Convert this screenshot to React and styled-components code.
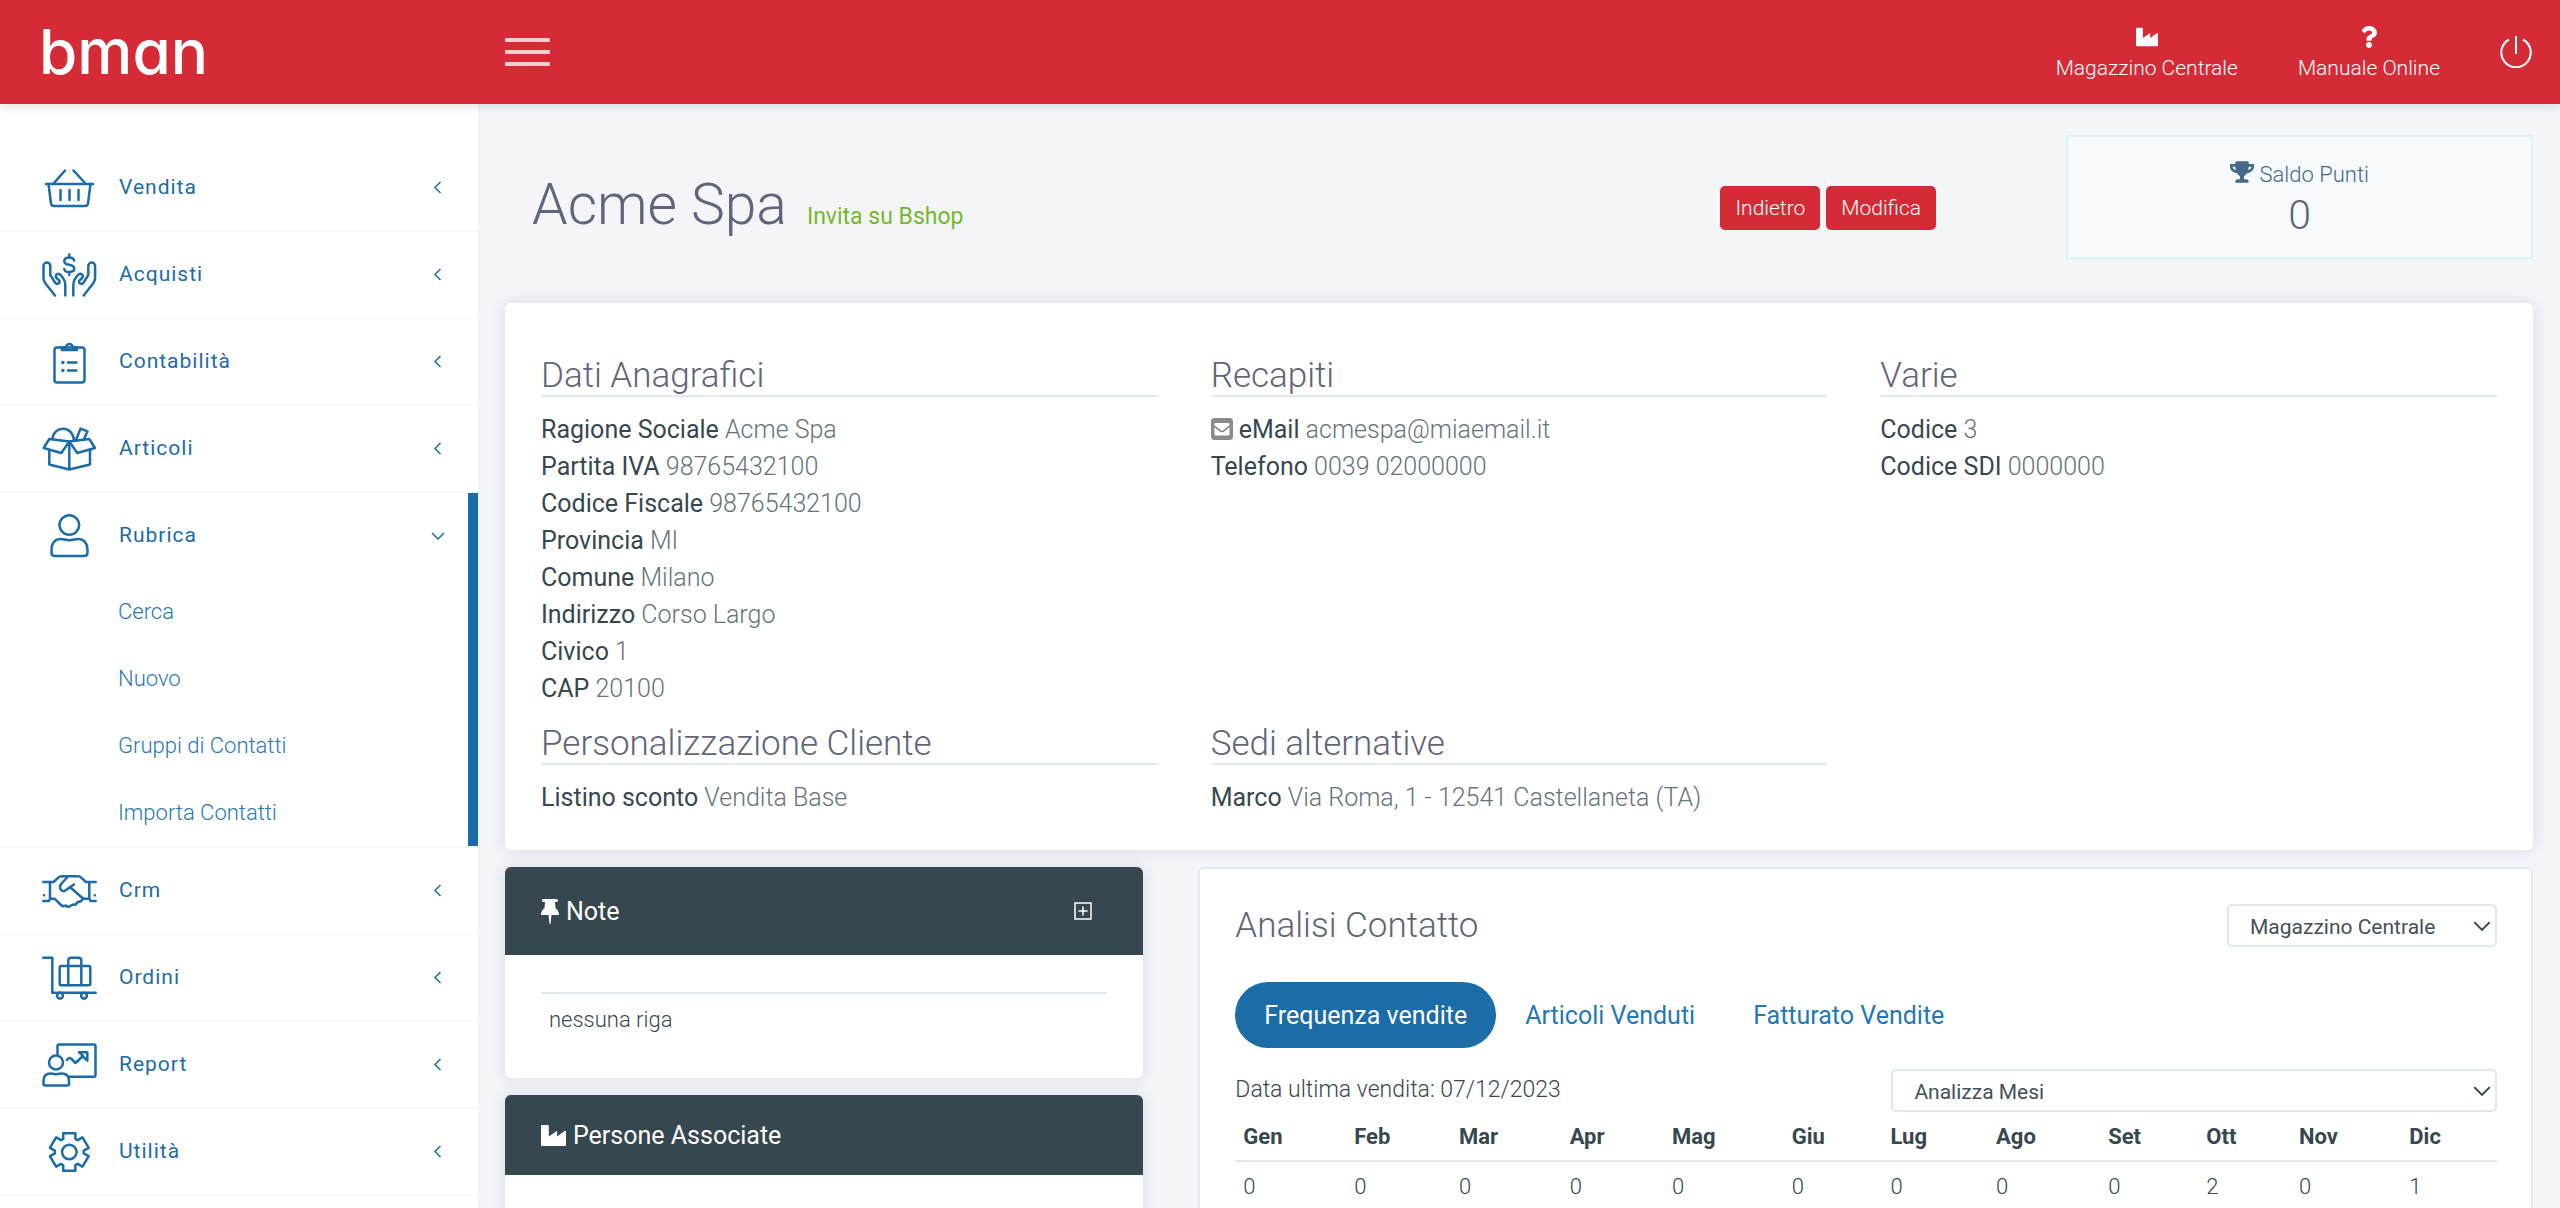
import React from "react";
import styled, { createGlobalStyle } from "styled-components";
import { FaQuestion, FaTrophy } from "react-icons/fa";

const GlobalStyle = createGlobalStyle`
  * {
    box-sizing: border-box;
  }
  body {
    margin: 0;
    background: #f3f5f9;
    color: #37474f;
    font-family: Roboto, "Liberation Sans", sans-serif;
    font-size: 25px;
    font-weight: 300;
    line-height: 37px;
  }
  a {
    color: inherit;
    text-decoration: none;
  }
  ul {
    margin: 0;
    padding: 0;
    list-style: none;
  }
  button,
  select {
    font: inherit;
  }
`;

const Page = styled.div`
  height: 100vh;
  display: flex;
  flex-direction: column;
  overflow: hidden;
`;

const Header = styled.header`
  flex: none;
  z-index: 1;
  display: flex;
  align-items: center;
  height: 104px;
  padding: 0 28px 0 39px;
  background: #d52b36;
  color: #fff;
  box-shadow: 0 2px 10px rgba(60, 70, 90, 0.16);
`;

const Logo = styled.a`
  width: 466px;
  font-family: Inter, Roboto, sans-serif;
  font-size: 62px;
  line-height: 80px;
  font-weight: 500;
  font-feature-settings: "cv11";
`;

const MenuToggle = styled.button`
  display: flex;
  flex-direction: column;
  gap: 8px;
  width: 45px;
  padding: 0;
  border: 0;
  background: none;
`;

const MenuBar = styled.span`
  height: 4px;
  background: #f7cdd0;
`;

const HeaderLinks = styled.nav`
  display: flex;
  align-items: center;
  gap: 60px;
  margin-left: auto;
`;

const HeaderLink = styled.a`
  display: flex;
  flex-direction: column;
  align-items: center;
  gap: 5px;
  padding-top: 4px;
  font-size: 21px;
  line-height: 30px;
`;

const PowerLink = styled.a`
  display: flex;
`;

const Body = styled.div`
  flex: 1;
  display: flex;
  min-height: 0;
`;

const Sidebar = styled.nav`
  flex: none;
  width: 478px;
  padding-top: 41px;
  background: #fff;
`;

const MenuItem = styled.li`
  border-bottom: 2px solid #f7f8fa;
  box-shadow: ${(props) => (props.$open ? "inset -10px 0 #1c6ca8" : "none")};
`;

const MenuLink = styled.a`
  display: flex;
  align-items: center;
  height: 85px;
  padding-left: 42px;
  padding-right: 33px;
  color: #1c6ca8;
  font-size: 21px;
  font-weight: 400;
  letter-spacing: 1px;
`;

const MenuLabel = styled.span`
  flex: 1;
  margin-left: 21px;
  padding-bottom: 1px;
`;

const SubLink = styled.a`
  display: block;
  padding-left: 118px;
  color: #1f78b8;
  font-size: 22px;
  line-height: 67px;
`;

const Main = styled.main`
  flex: 1;
  min-width: 0;
  padding: 31px 27px 0;
`;

const TitleRow = styled.div`
  display: flex;
  align-items: center;
  height: 124px;
  margin-bottom: 44px;
  padding-left: 27px;
`;

const Title = styled.h1`
  flex: 1;
  margin: 28px 0 0;
  color: #606579;
  font-size: 57px;
  line-height: 70px;
  font-weight: 300;
`;

const InviteLink = styled.a`
  margin-left: 20px;
  color: #76b82a;
  font-size: 23px;
  font-weight: 400;
`;

const Actions = styled.div`
  display: flex;
  gap: 6px;
  margin-top: 22px;
  margin-right: 130px;
`;

const Action = styled.button`
  height: 44px;
  padding: 0 15px;
  border: 0;
  border-radius: 5px;
  background: #d52b36;
  color: #fff;
  font-size: 21px;
`;

const Points = styled.div`
  flex: 0 0 467px;
  height: 124px;
  padding-top: 22px;
  border: 2px solid #d9f1f7;
  background: #f7fafd;
  color: #466a86;
  font-size: 22px;
  line-height: 32px;
  text-align: center;

  svg {
    vertical-align: -2px;
  }
`;

const PointsValue = styled.div`
  color: #606579;
  font-size: 41px;
  line-height: 48px;
`;

const Card = styled.section`
  border-radius: 6px;
  background: #fff;
  box-shadow: 0 0 16px rgba(60, 70, 90, 0.14);
  overflow: hidden;
`;

const InfoCard = styled(Card)`
  display: grid;
  grid-template-columns: repeat(3, 1fr);
  column-gap: 53px;
  padding: 36px 36px 34px;
  margin-bottom: 17px;
`;

const InfoTitle = styled.h2`
  margin: 0 0 14px;
  padding-top: 18px;
  border-bottom: 2px solid #e3e9f1;
  color: #606579;
  font-size: 35px;
  line-height: 38px;
  font-weight: 300;
`;

const Fact = styled.div`
  color: #66737a;

  svg {
    margin-right: 6px;
    vertical-align: -2px;
  }
`;

const FactLabel = styled.span`
  color: #37474f;
  font-weight: 400;
`;

const Columns = styled.div`
  display: grid;
  grid-template-columns: 638fr 1334fr;
  gap: 55px;
`;

const Side = styled.div`
  display: flex;
  flex-direction: column;
  gap: 17px;
`;

const PanelHead = styled.header`
  display: flex;
  align-items: center;
  gap: 7px;
  height: ${(props) => (props.$tall ? 88 : 80)}px;
  padding: 0 51px 0 36px;
  background: #37474f;
  color: #fff;
`;

const PanelTitle = styled.h3`
  flex: 1;
  margin: 0;
  font-size: 25px;
  font-weight: 400;
`;

const AddButton = styled.button`
  display: flex;
  padding: 0;
  border: 0;
  background: none;
  color: #fff;
`;

const PanelBody = styled.div`
  min-height: 123px;
  padding: 37px 36px 33px;
`;

const Empty = styled.p`
  margin: 0;
  padding: 7px 8px;
  border-top: 2px solid #e3e9f1;
  font-size: 22px;
`;

const Analysis = styled(Card)`
  border: 2px solid #e3e9f1;
  border-bottom: 0;
  border-radius: 6px 6px 0 0;
  padding: 35px 34px 35px 35px;
  min-height: 400px;
  box-shadow: none;
`;

const Split = styled.div`
  display: flex;
  justify-content: space-between;
  align-items: center;
`;

const AnalysisTitle = styled.h2`
  margin: 0;
  color: #606579;
  font-size: 35px;
  line-height: 43px;
  font-weight: 300;
`;

const SelectBox = styled.div`
  display: grid;
  align-items: center;
  width: ${(props) => props.$width};

  > * {
    grid-area: 1 / 1;
  }
  svg {
    justify-self: end;
    margin-right: 6px;
    pointer-events: none;
  }
`;

const Select = styled.select`
  width: 100%;
  height: 43px;
  padding: 3px 21px 0;
  border: 2px solid #e0e7f0;
  border-radius: 5px;
  background: #fff;
  color: #455058;
  font-size: 21px;
  line-height: 36px;
  font-weight: 400;
  appearance: none;
`;

const Tabs = styled.div`
  display: flex;
  margin: 35px 0 21px;
`;

const Tab = styled.button`
  height: 66px;
  padding: 0 29px;
  border: 0;
  border-radius: 33px;
  background: ${(props) => (props.$active ? "#1c6ca8" : "none")};
  color: ${(props) => (props.$active ? "#fff" : "#1f78b8")};
  font-size: 25px;
  font-weight: 400;
`;

const LastSale = styled.div`
  padding-bottom: 3px;
  font-size: 23px;
`;

const Months = styled.table`
  width: 100%;
  border-collapse: collapse;
  font-size: 22px;
  line-height: 32px;

  th,
  td {
    padding: 9px 8px 7px;
    text-align: left;
    font-weight: 300;
  }
  th {
    border-bottom: 2px solid #e3e9ee;
    font-weight: 700;
  }
`;

const Drawing = styled.svg`
  flex: none;
  width: 56px;
  height: 44px;
  fill: none;
  stroke: currentColor;
  stroke-width: 2.5;
  stroke-linecap: round;
  stroke-linejoin: round;
`;

const gear = (() => {
  const points = [];
  for (let i = 0; i < 6; i++) {
    [
      [14.5, -25],
      [19.8, -18],
      [19.8, 18],
      [14.5, 25]
    ].forEach(([r, offset]) => {
      const angle = ((i * 60 + offset - 90) * Math.PI) / 180;
      points.push(
        `${(27.3 + r * Math.cos(angle)).toFixed(1)},${(
          22 +
          r * Math.sin(angle)
        ).toFixed(1)}`
      );
    });
  }
  return points.join(" ");
})();

const hand =
  "M13 42.5 L3.5 30.5 Q1.5 28 1.5 25 V13 a3.4 3.4 0 0 1 6.8 0 V22 L13 29.5 c2 2.6 5.5 1 4.2-2 L14.5 25 c-2-3 1.5-5.8 4-3.2 C22 26 23.3 28 23.3 33 V42.5";

const icons = {
  basket: (
    <>
      <path d="M4 18 H51 M23 4.5 L12 17 M31.5 4.5 L43 17" />
      <path d="M6.5 18 L9 37.5 Q9.5 40 12 40 H43 Q45.5 40 46 37.5 L48.5 18" />
      <path d="M18.5 24 V34 M27.5 24 V34 M36.5 24 V34" />
    </>
  ),
  hands: (
    <>
      <path d={hand} />
      <path d={hand} transform="matrix(-1 0 0 1 54.6 0)" />
      <path d="M32 7.5 Q31.5 4.5 27.3 4.5 Q22.3 4.5 22.3 8.2 Q22.3 11 27.3 11.8 Q32.3 12.7 32.3 15.6 Q32.3 19 27.3 19 Q22.5 19 22.3 16 M27.3 1.5 V4.5 M27.3 19 V22" />
    </>
  ),
  clipboard: (
    <>
      <rect x="12.5" y="7.5" width="30" height="35" rx="2.5" />
      <path d="M20 7.5 H24 a3.4 3.4 0 1 1 6.8 0 H35 V10 H20z" />
      <path d="M26 22.5 H34.5 M26 30.5 H34.5" />
      <path strokeWidth="3.5" d="M20.8 22.5 h.1 M20.8 30.5 h.1" />
    </>
  ),
  box: (
    <>
      <path d="M7.3 12 L27.3 14.5 L19.3 26 L1.7 21z M47.3 12 L27.3 14.5 L35.3 26 L53 21z" />
      <path d="M7.3 23 V37.5 L27.3 42.5 L48 37.5 V23 M27.3 14.5 V42" />
      <path d="M10.3 12 C12 -2 31 -2 32 13.5 M34 13 L38.5 1.7 L45.5 4.3 L42 12" />
    </>
  ),
  person: (
    <>
      <circle cx="27.3" cy="11" r="9.8" />
      <path d="M13 42 H42 Q45.5 42 45.5 38.5 V36 C45.5 29 41.5 25 36 25 C33 25 31 26.2 27.3 26.2 S22 25 19 25 C13 25 9.5 29 9.5 36 V38.5 Q9.5 42 13 42z" />
    </>
  ),
  handshake: (
    <>
      <path d="M1.3 13 H11.5 L16 8.8 Q17.5 7.3 20 7.3 H36 Q38 7.3 39.5 8.8 L44 13 H53.7 M8 13 V29.7 M47.3 13 V29.7 M1.3 32 H7 L8 29.7 H12.5 L19 36 Q21 38 23.5 36.5 Q26 39 29 36.5 L31 35.5 Q34 36.5 35.5 33 Q39 33.5 41 29.7 H47.3 L48.5 32 H53.7" />
      <path d="M25.5 8 L19.5 14.5 Q17 17.5 18.7 20.5 Q21 23.5 24 21 L32 15.5 M28.5 18.5 L41 29.5" />
      <path d="M2 26.3 h.1 M52.7 26.3 h.1" />
    </>
  ),
  cart: (
    <>
      <path d="M1.3 1.7 H10.3 V36.7 H53.7" />
      <circle cx="18" cy="39.7" r="2.9" />
      <circle cx="42" cy="39.7" r="2.9" />
      <rect x="17.7" y="10" width="30.6" height="19.3" rx="1.5" />
      <path d="M26.3 29 V4.5 Q26.3 1.7 29 1.7 H36.5 Q39.3 1.7 39.3 4.5 V29" />
    </>
  ),
  report: (
    <>
      <path d="M15.5 11.5 V3 Q15.5 1.5 17 1.5 H52 Q53.5 1.5 53.5 3 V32 Q53.5 33.7 52 33.7 H27" />
      <circle cx="14" cy="19.5" r="7" />
      <path d="M3 42.5 H25.5 Q27 42.5 27 41 V38 Q27 30.5 20 30.5 Q17.5 30.5 14 31.2 Q10.5 30.5 8.5 30.5 Q1.5 30.5 1.5 38 V41 Q1.5 42.5 3 42.5z" />
      <path d="M25 17 Q27.5 13.5 29.5 16 L33.5 20 L41 13 L37 9.2 H45.3 V17.7 L41.5 14" />
    </>
  ),
  gear: (
    <>
      <polygon points={gear} />
      <circle cx="27.3" cy="22" r="7.3" />
    </>
  )
};

const Chevron = ({ down, size = 14 }) => (
  <svg width={size} height={size} viewBox="0 0 14 14" fill="none">
    <path
      d={down ? "M1 4 L7 10 L13 4" : "M9.5 1 L4 6.5 L9.5 12"}
      stroke="currentColor"
      strokeWidth="1.5"
    />
  </svg>
);

const Industry = ({ size }) => (
  <svg width={size} height={size} viewBox="0 0 24 24" fill="currentColor">
    <path d="M1 2 H6.5 Q7.5 2 7.5 3 V13 L15.5 7.5 V13 L23 7.5 Q24 7.5 24 8.5 V21 Q24 22 23 22 H1 Q0 22 0 21 V3 Q0 2 1 2z" />
  </svg>
);

const Pin = () => (
  <svg width="18" height="25" viewBox="0 0 18 25" fill="currentColor">
    <path d="M2.5 0 H15.5 Q17 0 17 1.5 T15.5 3 H14 L14.5 9 Q18 11.5 18 16 H10.5 L9.5 25 H8.5 L7.5 16 H0 Q0 11.5 3.5 9 L4 3 H2.5 Q1 3 1 1.5 T2.5 0z" />
  </svg>
);

const MailIcon = () => (
  <svg width="22" height="22" viewBox="0 0 22 22">
    <rect width="22" height="22" rx="3.5" fill="#8b8b8b" />
    <rect x="3.5" y="5" width="15" height="12.5" rx="1" fill="#fff" />
    <path
      d="M3 8 L9.5 13 Q11 14 12.5 13 L19 8"
      fill="none"
      stroke="#8b8b8b"
      strokeWidth="1.6"
    />
  </svg>
);

const menu = [
  { label: "Vendita", icon: "basket" },
  { label: "Acquisti", icon: "hands" },
  { label: "Contabilità", icon: "clipboard" },
  { label: "Articoli", icon: "box" },
  {
    label: "Rubrica",
    icon: "person",
    items: ["Cerca", "Nuovo", "Gruppi di Contatti", "Importa Contatti"]
  },
  { label: "Crm", icon: "handshake" },
  { label: "Ordini", icon: "cart" },
  { label: "Report", icon: "report" },
  { label: "Utilità", icon: "gear" }
];

const info = [
  {
    title: "Dati Anagrafici",
    facts: [
      ["Ragione Sociale", "Acme Spa"],
      ["Partita IVA", "98765432100"],
      ["Codice Fiscale", "98765432100"],
      ["Provincia", "MI"],
      ["Comune", "Milano"],
      ["Indirizzo", "Corso Largo"],
      ["Civico", "1"],
      ["CAP", "20100"]
    ]
  },
  {
    title: "Recapiti",
    facts: [
      ["eMail", "acmespa@miaemail.it"],
      ["Telefono", "0039 02000000"]
    ]
  },
  {
    title: "Varie",
    facts: [
      ["Codice", "3"],
      ["Codice SDI", "0000000"]
    ]
  },
  {
    title: "Personalizzazione Cliente",
    facts: [["Listino sconto", "Vendita Base"]]
  },
  {
    title: "Sedi alternative",
    facts: [["Marco", "Via Roma, 1 - 12541 Castellaneta (TA)"]]
  }
];

const months = [
  ["Gen", 0],
  ["Feb", 0],
  ["Mar", 0],
  ["Apr", 0],
  ["Mag", 0],
  ["Giu", 0],
  ["Lug", 0],
  ["Ago", 0],
  ["Set", 0],
  ["Ott", 2],
  ["Nov", 0],
  ["Dic", 1]
];

export default () => {
  return (
    <Page>
      <GlobalStyle />
      <Header>
        <Logo href="#">bman</Logo>
        <MenuToggle aria-label="Menu">
          <MenuBar />
          <MenuBar />
          <MenuBar />
        </MenuToggle>
        <HeaderLinks>
          <HeaderLink href="#">
            <Industry size={22} />
            Magazzino Centrale
          </HeaderLink>
          <HeaderLink href="#">
            <FaQuestion size={22} />
            Manuale Online
          </HeaderLink>
          <PowerLink href="#" aria-label="Esci">
            <svg width="32" height="32" viewBox="0 0 32 32" fill="none">
              <path
                d="M16 0 V18 M9 3.5 A14.7 14.7 0 1 0 23 3.5"
                stroke="#fff"
                strokeWidth="2"
              />
            </svg>
          </PowerLink>
        </HeaderLinks>
      </Header>
      <Body>
        <Sidebar>
          <ul>
            {menu.map((m) => (
              <MenuItem key={m.label} $open={m.items}>
                <MenuLink href="#">
                  <Drawing viewBox="0 0 56 44">{icons[m.icon]}</Drawing>
                  <MenuLabel>{m.label}</MenuLabel>
                  <Chevron down={m.items} />
                </MenuLink>
                {m.items && (
                  <ul>
                    {m.items.map((item) => (
                      <li key={item}>
                        <SubLink href="#">{item}</SubLink>
                      </li>
                    ))}
                  </ul>
                )}
              </MenuItem>
            ))}
          </ul>
        </Sidebar>
        <Main>
          <TitleRow>
            <Title>
              Acme Spa
              <InviteLink href="#">Invita su Bshop</InviteLink>
            </Title>
            <Actions>
              <Action>Indietro</Action>
              <Action>Modifica</Action>
            </Actions>
            <Points>
              <FaTrophy size={24} /> Saldo Punti
              <PointsValue>0</PointsValue>
            </Points>
          </TitleRow>
          <InfoCard>
            {info.map(({ title, facts }) => (
              <div key={title}>
                <InfoTitle>{title}</InfoTitle>
                {facts.map(([label, value]) => (
                  <Fact key={label}>
                    {label === "eMail" && <MailIcon />}
                    <FactLabel>{label}</FactLabel> {value}
                  </Fact>
                ))}
              </div>
            ))}
          </InfoCard>
          <Columns>
            <Side>
              <Card>
                <PanelHead $tall>
                  <Pin />
                  <PanelTitle>Note</PanelTitle>
                  <AddButton aria-label="Aggiungi nota">
                    <svg width="18" height="18" viewBox="0 0 18 18" fill="none">
                      <path
                        d="M1 1 H17 V17 H1z M9 4.5 V13.5 M4.5 9 H13.5"
                        stroke="currentColor"
                        strokeWidth="1.5"
                      />
                    </svg>
                  </AddButton>
                </PanelHead>
                <PanelBody>
                  <Empty>nessuna riga</Empty>
                </PanelBody>
              </Card>
              <Card>
                <PanelHead>
                  <Industry size={25} />
                  <PanelTitle>Persone Associate</PanelTitle>
                </PanelHead>
                <PanelBody />
              </Card>
            </Side>
            <Analysis>
              <Split>
                <AnalysisTitle>Analisi Contatto</AnalysisTitle>
                <SelectBox $width="270px">
                  <Select aria-label="Magazzino">
                    <option>Magazzino Centrale</option>
                  </Select>
                  <Chevron down size={18} />
                </SelectBox>
              </Split>
              <Tabs>
                <Tab $active>Frequenza vendite</Tab>
                <Tab>Articoli Venduti</Tab>
                <Tab>Fatturato Vendite</Tab>
              </Tabs>
              <Split>
                <LastSale>Data ultima vendita: 07/12/2023</LastSale>
                <SelectBox $width="48%">
                  <Select aria-label="Periodo">
                    <option>Analizza Mesi</option>
                  </Select>
                  <Chevron down size={18} />
                </SelectBox>
              </Split>
              <Months>
                <thead>
                  <tr>
                    {months.map(([name]) => (
                      <th key={name}>{name}</th>
                    ))}
                  </tr>
                </thead>
                <tbody>
                  <tr>
                    {months.map(([name, total]) => (
                      <td key={name}>{total}</td>
                    ))}
                  </tr>
                </tbody>
              </Months>
            </Analysis>
          </Columns>
        </Main>
      </Body>
    </Page>
  );
};
